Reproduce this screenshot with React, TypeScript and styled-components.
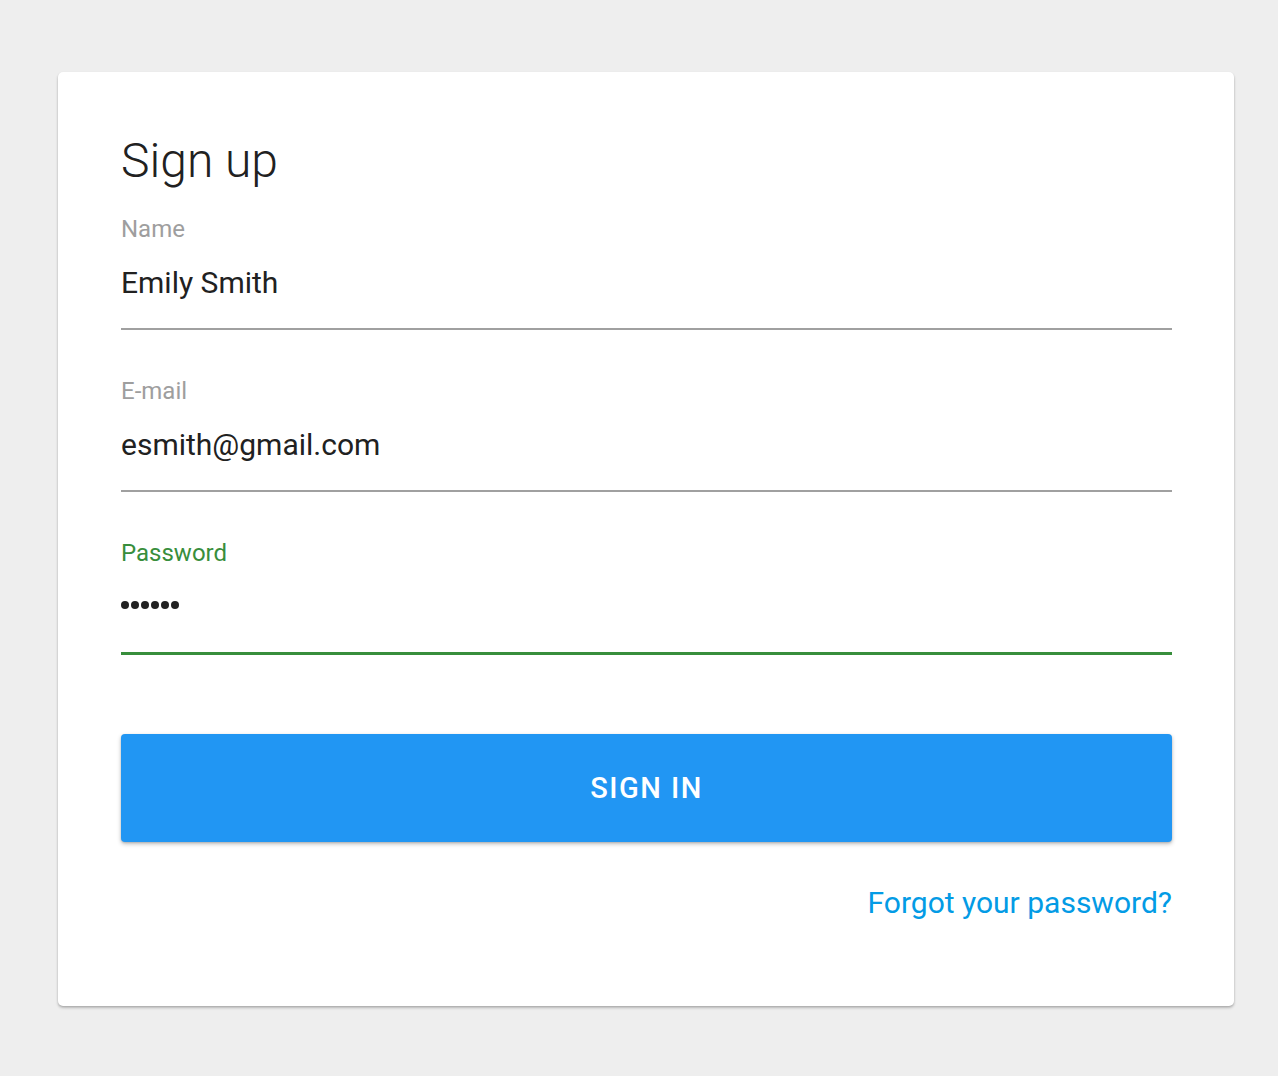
import React from "react";
import styled, { createGlobalStyle } from "styled-components";

const Global = createGlobalStyle`
  html, body { margin: 0; padding: 0; background: #eeeeee; }
  body { font-family: Roboto, "Noto Sans", sans-serif; -webkit-font-smoothing: antialiased; }
  * { box-sizing: border-box; }
`;

const Page = styled.div`
  min-height: 1076px;
  padding: 72px 44px 0 58px;
`;

const Card = styled.div`
  width: 1176px;
  height: 934px;
  background: #ffffff;
  border-radius: 5px;
  box-shadow: 0 2px 3px rgba(0, 0, 0, 0.2), 0 1px 2px rgba(0, 0, 0, 0.12);
  padding: 61px 62px 0 63px;
  display: flex;
  flex-direction: column;
`;

const Title = styled.h1`
  margin: 0;
  font-size: 48px;
  font-weight: 300;
  line-height: 56px;
  color: #212121;
`;

const Form = styled.form`
  display: flex;
  flex-direction: column;
  margin-top: 27px;
`;

const Field = styled.div`
  display: flex;
  flex-direction: column;
  & + & {
    margin-top: 48px;
  }
`;

const Label = styled.label<{ $active?: boolean }>`
  font-size: 24px;
  line-height: 26px;
  color: ${(p) => (p.$active ? "#388e3c" : "#9e9e9e")};
`;

const Value = styled.div`
  margin-top: 23px;
  font-size: 30px;
  line-height: 36px;
  color: #212121;
  height: 36px;
`;

const Dots = styled.div`
  margin-top: 23px;
  height: 36px;
  display: flex;
  align-items: center;
  gap: 2px;
`;

const Dot = styled.span`
  width: 8px;
  height: 8px;
  border-radius: 50%;
  background: #212121;
  margin-bottom: 5px;
`;

const Underline = styled.div<{ $active?: boolean }>`
  margin-top: 27px;
  height: ${(p) => (p.$active ? "3px" : "2px")};
  background: ${(p) => (p.$active ? "#388e3c" : "#a0a0a0")};
`;

const Button = styled.button`
  margin-top: 79px;
  height: 108px;
  width: 100%;
  border: none;
  border-radius: 4px;
  background: #2196f3;
  color: #ffffff;
  font-family: Roboto, "Noto Sans", sans-serif;
  font-size: 29px;
  font-weight: 500;
  letter-spacing: 1.5px;
  box-shadow: 0 2px 4px rgba(0, 0, 0, 0.25), 0 1px 2px rgba(0, 0, 0, 0.12);
  cursor: pointer;
`;

const Footer = styled.div`
  display: flex;
  justify-content: flex-end;
  margin-top: 43px;
`;

const Link = styled.a`
  font-size: 30px;
  line-height: 36px;
  color: #039be5;
  text-decoration: none;
`;

export default function App() {
  return (
    <>
      <Global />
      <Page>
        <Card>
          <Title>Sign up</Title>
          <Form onSubmit={(e) => e.preventDefault()}>
            <Field>
              <Label>Name</Label>
              <Value>Emily Smith</Value>
              <Underline />
            </Field>
            <Field>
              <Label>E-mail</Label>
              <Value>esmith@gmail.com</Value>
              <Underline />
            </Field>
            <Field>
              <Label $active>Password</Label>
              <Dots>
                {Array.from({ length: 6 }).map((_, i) => (
                  <Dot key={i} />
                ))}
              </Dots>
              <Underline $active />
            </Field>
            <Button type="submit">SIGN IN</Button>
          </Form>
          <Footer>
            <Link href="#">Forgot your password?</Link>
          </Footer>
        </Card>
      </Page>
    </>
  );
}
